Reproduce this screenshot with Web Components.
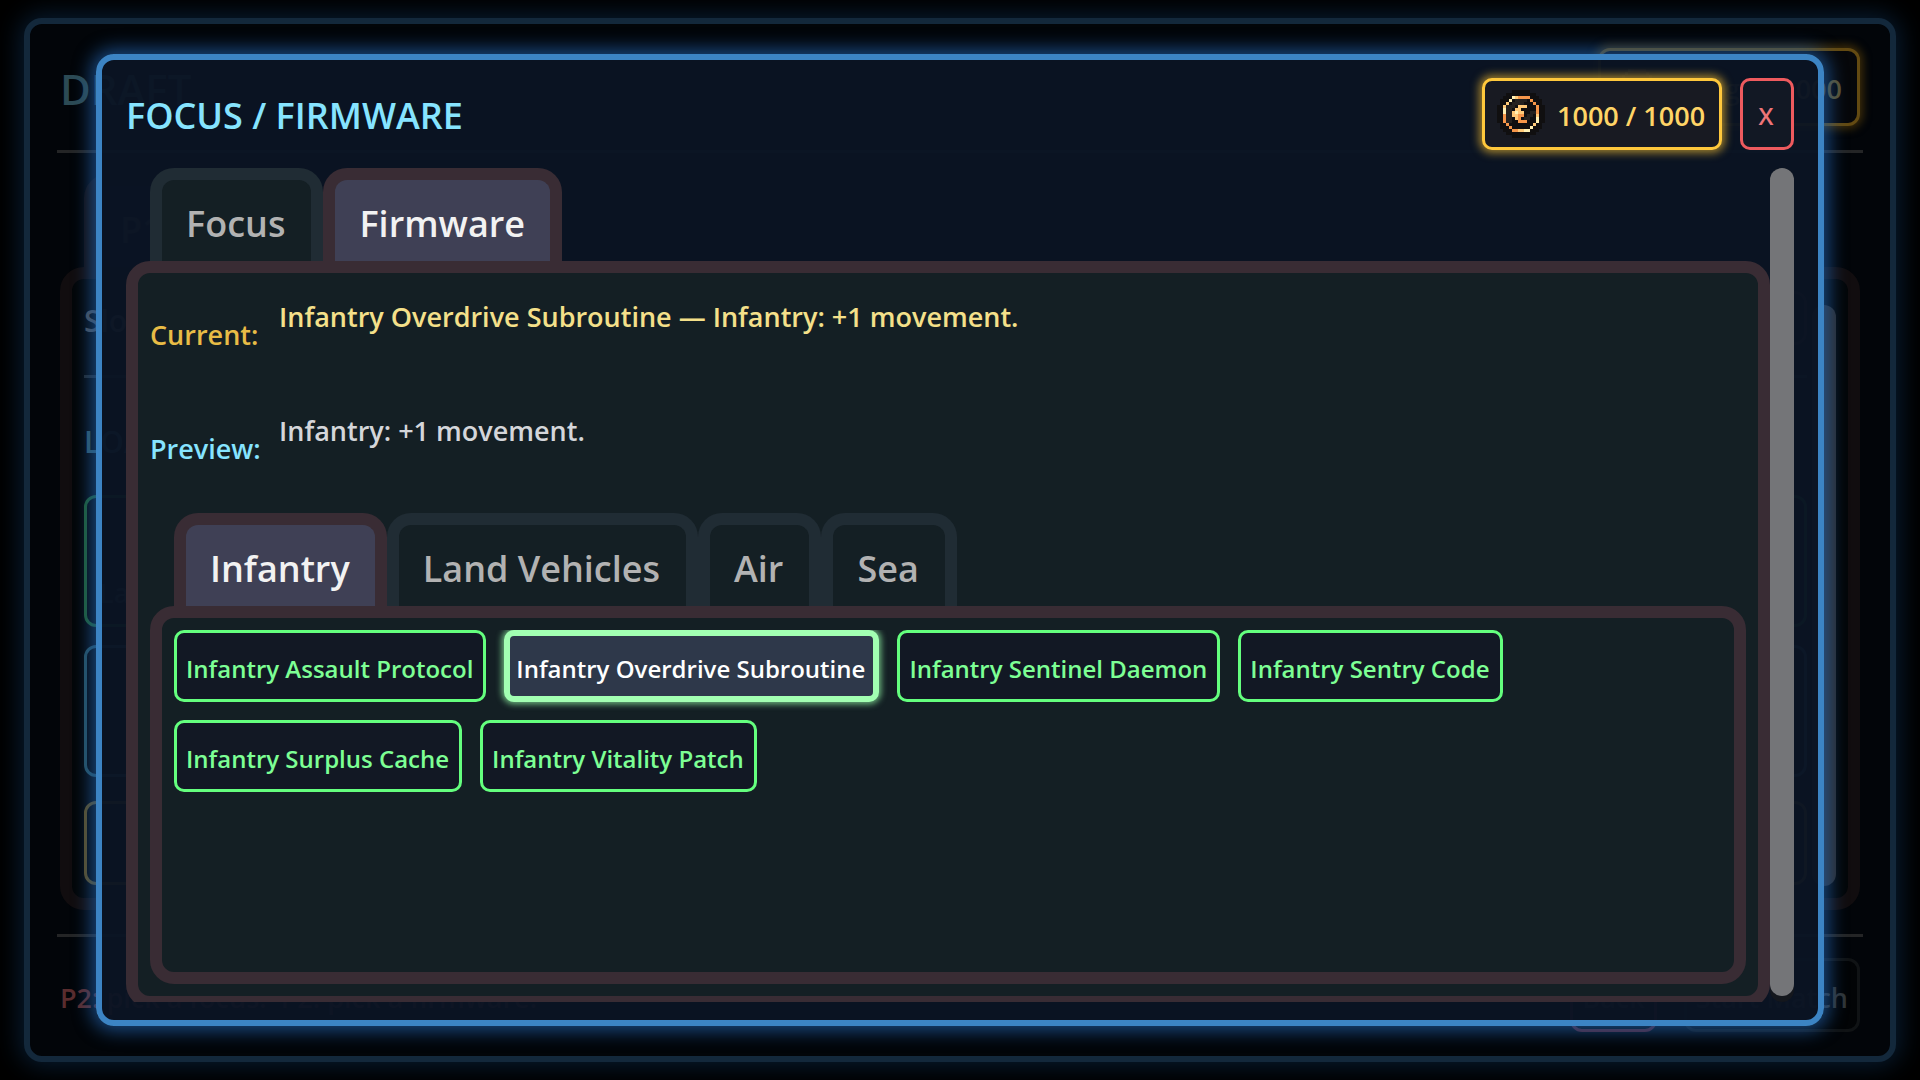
<!DOCTYPE html>
<html lang="en">
<head>
<meta charset="utf-8">
<title>Focus / Firmware</title>
<style>
  body{
    margin: 0;
    min-height: 100vh;
    display: grid;
    overflow: hidden;
    background: #000;
    color: #f2f2f2;
    font-family: "Open Sans", "Noto Sans", sans-serif;
    font-weight: 600;
    font-size: 27px;
    line-height: 38px;
  }

  body > *{
    grid-area: 1 / 1;
  }
</style>
</head>
<body>
  <draft-screen></draft-screen>

  <focus-dialog heading="FOCUS / FIRMWARE">
    <coin-badge slot="actions">1000 / 1000</coin-badge>

    <tab-panel tabs="Focus,Firmware" selected="Firmware">
      <info-row label="Current:" tone="gold">Infantry Overdrive Subroutine — Infantry: +1 movement.</info-row>
      <info-row label="Preview:" tone="cyan">Infantry: +1 movement.</info-row>

      <tab-panel class="units" tabs="Infantry,Land Vehicles,Air,Sea" selected="Infantry">
        <firmware-list>
          <firmware-chip>Infantry Assault Protocol</firmware-chip>
          <firmware-chip selected>Infantry Overdrive Subroutine</firmware-chip>
          <firmware-chip>Infantry Sentinel Daemon</firmware-chip>
          <firmware-chip>Infantry Sentry Code</firmware-chip>
          <firmware-chip>Infantry Surplus Cache</firmware-chip>
          <firmware-chip>Infantry Vitality Patch</firmware-chip>
        </firmware-list>
      </tab-panel>
    </tab-panel>
  </focus-dialog>

<script>
function makeTemplate(html) {
  const template = document.createElement("template");
  template.innerHTML = html;
  return template;
}

class BaseElement extends HTMLElement {
  constructor() {
    super();
    this.attachShadow({ mode: "open" });
    this.shadowRoot.appendChild(this.constructor.template.content.cloneNode(true));
  }
}

// 16x16 coin: k outline, d face, y/o/w light, orange and pale metal
const COIN = [
  ".....kkkkkk.....",
  "...kkkkkkkkkk...",
  "..kkkwyooookkk..",
  ".kkkwkddddkokkk.",
  ".kkykddddkkkokk.",
  "kkydddkyyykkkokk",
  "kkwddkyykkkkkokk",
  "kkwddywyykkddokk",
  "kkoddyyookddkykk",
  "kkoddkyokddkkwkk",
  "kkoddkkoookkkwkk",
  ".kkokkkkkkkkykk.",
  ".kkkokkkkkkwkkk.",
  "..kkkooyywwkkk..",
  "...kkkkkkkkkk...",
  ".....kkkkkk.....",
];
const COIN_COLORS = { k: "#100f10", d: "#24211f", w: "#fff0b4", y: "#ffc978", o: "#f5964a" };

class PixelCoin extends BaseElement {
  static template = makeTemplate(`
    <style>
      :host{
        display: block;
        flex: none;
        width: 48px;
        height: 48px;
      }

      svg{
        display: block;
      }
    </style>
    <svg width="48" height="48" viewBox="0 0 16 16" shape-rendering="crispEdges" aria-hidden="true"></svg>
  `);

  connectedCallback() {
    let rects = "";
    COIN.forEach((row, y) => {
      [...row].forEach((cell, x) => {
        if (cell != ".") {
          rects += `<rect x="${x}" y="${y}" width="1" height="1" fill="${COIN_COLORS[cell]}"/>`;
        }
      });
    });
    this.shadowRoot.querySelector("svg").innerHTML = rects;
  }
}

class CoinBadge extends BaseElement {
  static template = makeTemplate(`
    <style>
      :host{
        display: flex;
        align-items: center;
        gap: 12px;
        box-sizing: border-box;
        min-width: 240px;
        height: 72px;
        padding: 0 12px;
        border: 3px solid #ffc83c;
        border-radius: 10px;
        background: #181a22;
        color: #ffd466;
        box-shadow: 0 0 9px 3px rgba(255, 196, 50, 0.6);
        white-space: nowrap;
      }

      .amount{
        padding-top: 4px;
      }
    </style>
    <pixel-coin></pixel-coin>
    <span class="amount"><slot></slot></span>
  `);
}

class InfoRow extends BaseElement {
  static template = makeTemplate(`
    <style>
      :host{
        display: grid;
        grid-template-columns: 111px 1fr;
        column-gap: 18px;
        height: 96px;
        margin-bottom: 18px;
      }

      .label{
        align-self: center;
        padding-top: 4px;
        color: #e8bc46;
      }

      .value{
        padding-top: 13px;
        color: #f4e08a;
      }

      :host([tone="cyan"]) .label{
        color: #86e4ff;
      }

      :host([tone="cyan"]) .value{
        color: #d4d6da;
      }
    </style>
    <span class="label"></span>
    <span class="value"><slot></slot></span>
  `);

  connectedCallback() {
    this.shadowRoot.querySelector(".label").textContent = this.getAttribute("label");
  }
}

class TabPanel extends BaseElement {
  static template = makeTemplate(`
    <style>
      :host{
        display: block;
      }

      .tabs{
        display: flex;
        padding-left: 24px;
      }

      button{
        margin: 0;
        padding: 19px 26px 12px 24px;
        border: 12px solid #202c34;
        border-bottom: 0;
        border-radius: 24px 24px 0 0;
        background: #141f24;
        color: #b2b2b2;
        font: inherit;
        font-size: 36px;
        line-height: 50px;
        white-space: nowrap;
      }

      button[aria-selected="true"]{
        padding-right: 25px;
        border-color: #392c34;
        background: #3f4055;
        color: #f2f2f2;
      }

      .panel{
        padding: 12px;
        border: 12px solid #392c34;
        border-radius: 24px;
        background: #141f24;
      }

      :host(.units) .panel{
        box-sizing: border-box;
        min-height: 35vh;
      }
    </style>
    <div class="tabs" role="tablist"></div>
    <div class="panel" role="tabpanel"><slot></slot></div>
  `);

  connectedCallback() {
    const tabs = this.shadowRoot.querySelector(".tabs");
    for (const name of this.getAttribute("tabs").split(",")) {
      const button = document.createElement("button");
      button.type = "button";
      button.setAttribute("role", "tab");
      button.setAttribute("aria-selected", name == this.getAttribute("selected"));
      button.textContent = name;
      tabs.appendChild(button);
    }
  }
}

class FirmwareList extends BaseElement {
  static template = makeTemplate(`
    <style>
      :host{
        display: flex;
        flex-wrap: wrap;
        gap: 18px;
        overflow: hidden;
        padding-bottom: 12px;
      }
    </style>
    <slot></slot>
  `);
}

class FirmwareChip extends BaseElement {
  static template = makeTemplate(`
    <style>
      :host{
        display: block;
      }

      button{
        display: block;
        box-sizing: border-box;
        height: 72px;
        margin: 0;
        padding: 6px 10px 0 9px;
        border: 3px solid #64ff7e;
        border-radius: 10px;
        background: #121824;
        color: #7dff94;
        font: inherit;
        font-size: 24px;
        white-space: nowrap;
      }

      :host([selected]) button{
        padding: 6px 8px 0 6px;
        border: 6px solid #a2ffb2;
        background: #2e384a;
        color: #fff;
        box-shadow: 0 0 6px 2px rgba(150, 255, 170, 0.7);
      }
    </style>
    <button type="button"><slot></slot></button>
  `);
}

class FocusDialog extends BaseElement {
  static template = makeTemplate(`
    <style>
      :host{
        display: flex;
        flex-direction: column;
        gap: 18px;
        box-sizing: border-box;
        height: calc(100vh - 108px);
        margin: 54px 96px;
        padding: 18px 24px;
        border: 6px solid #3c84c4;
        border-radius: 18px;
        background: rgba(11, 20, 36, 0.95);
        box-shadow: 0 0 18px 5px rgba(34, 100, 176, 0.7);
        z-index: 1;
      }

      header{
        display: flex;
        align-items: center;
        gap: 18px;
      }

      h1{
        flex: 1;
        margin: 0;
        padding-top: 4px;
        font: inherit;
        font-size: 36px;
        line-height: 50px;
        color: #86e4ff;
      }

      .close{
        width: 54px;
        height: 72px;
        margin: 0;
        padding: 4px 2px 0 0;
        border: 3px solid #ee5a5e;
        border-radius: 10px;
        background: #121824;
        color: #ee7478;
        font: inherit;
        font-size: 24px;
      }

      .body{
        display: flex;
        flex: 1;
        min-height: 0;
      }

      .content{
        flex: 1;
        min-width: 0;
        overflow: hidden;
      }

      .track{
        width: 24px;
        padding-bottom: 6px;
        border-radius: 12px;
        background: #14171d;
        box-sizing: border-box;
      }

      .thumb{
        height: 100%;
        border-radius: 12px;
        background: #747578;
      }
    </style>
    <header>
      <h1></h1>
      <slot name="actions"></slot>
      <button class="close" type="button" aria-label="Close">X</button>
    </header>
    <div class="body">
      <div class="content"><slot></slot></div>
      <div class="track"><div class="thumb"></div></div>
    </div>
  `);

  connectedCallback() {
    this.setAttribute("role", "dialog");
    this.shadowRoot.querySelector("h1").textContent = this.getAttribute("heading");
  }
}

// dimmed screen behind the dialog
class DraftScreen extends BaseElement {
  static template = makeTemplate(`
    <style>
      :host{
        display: flex;
        flex-direction: column;
        box-sizing: border-box;
        height: calc(100vh - 36px);
        margin: 18px 24px;
        padding: 24px 27px;
        border: 6px solid #13283b;
        border-radius: 18px;
        background: #020509;
        box-shadow: 0 0 24px 4px rgba(12, 40, 70, 0.7);
      }

      header,
      footer{
        display: flex;
        align-items: center;
        gap: 27px;
        padding: 0 3px;
      }

      header{
        height: 78px;
      }

      footer{
        height: 74px;
      }

      h2{
        flex: 1;
        margin: 0;
        padding-top: 4px;
        font: inherit;
        font-size: 42px;
        line-height: 58px;
        color: #2c4a54;
      }

      .budget{
        display: flex;
        align-items: center;
        gap: 12px;
        box-sizing: border-box;
        height: 78px;
        padding: 0 15px 0 12px;
        border: 3px solid #634a12;
        border-radius: 12px;
        background: #06070a;
        color: #5c532f;
        box-shadow: 0 0 9px 3px rgba(120, 84, 10, 0.5);
      }

      .budget span{
        padding-top: 4px;
      }

      .budget pixel-coin{
        opacity: 0.3;
      }

      hr{
        flex: none;
        width: 100%;
        height: 3px;
        margin: 24px 0 21px;
        border: 0;
        background: #242526;
      }

      .tab{
        align-self: flex-start;
        margin-left: 27px;
        padding: 19px 24px 12px;
        border: 12px solid #110d0f;
        border-bottom: 0;
        border-radius: 24px 24px 0 0;
        background: #12121a;
        color: #3a3c40;
        font-size: 36px;
        line-height: 50px;
      }

      .panel{
        flex: 1;
        display: flex;
        box-sizing: border-box;
        min-height: 0;
        margin: 0 3px;
        padding: 12px;
        border: 12px solid #110d0f;
        border-radius: 24px;
        background: #030608;
      }

      .slots{
        flex: 1;
        display: flex;
        flex-direction: column;
        gap: 18px;
        margin-right: 5px;
      }

      .line{
        flex: none;
        display: flex;
        align-items: center;
        justify-content: space-between;
        box-sizing: border-box;
        height: 54px;
        color: #4a4f54;
        font-size: 30px;
      }

      .line span{
        padding-top: 6px;
      }

      .rule{
        flex: none;
        height: 3px;
        margin-top: 12px;
        background: #22282c;
      }

      .line.loadout{
        height: 81px;
        padding-top: 4px;
        color: #2f5866;
      }

      .card{
        flex: none;
        box-sizing: border-box;
        height: 132px;
        padding: 76px 12px 0;
        border: 3px solid #1e5c30;
        border-radius: 12px;
        color: #34383c;
      }

      .card.blue{
        border-color: #25505e;
      }

      .card.gold{
        height: 84px;
        margin-top: 6px;
        border-color: #5e4e20;
      }

      .scroll{
        width: 24px;
        margin: 14px 0 0;
        border-radius: 12px;
        background: #2c2c2e;
      }

      footer p{
        flex: 1;
        margin: 0;
        padding-top: 6px;
        color: #5a2c2e;
        white-space: pre-wrap;
      }

      button{
        height: 74px;
        margin: 0;
        padding: 6px 9px 0;
        border: 3px solid #101315;
        border-radius: 12px;
        background: #020406;
        color: #303436;
        font: inherit;
      }

      .line button{
        width: 84px;
        height: 54px;
        border-color: #2a1a1e;
      }

      .back{
        border-color: #52202c;
      }
    </style>
    <header>
      <h2>DRAFT</h2>
      <div class="budget"><pixel-coin></pixel-coin><span>Budget: 1000</span></div>
    </header>
    <hr>
    <div class="tab">P1</div>
    <div class="panel">
      <div class="slots">
        <div class="line"><span>Slots</span><button type="button" aria-label="Clear slots"></button></div>
        <div class="rule"></div>
        <div class="line loadout"><span>LOADOUT</span></div>
        <div class="card">Land</div>
        <div class="card blue"></div>
        <div class="card gold"></div>
      </div>
      <div class="scroll"></div>
    </div>
    <hr>
    <footer>
      <p>P2: pick a focus.  P2: pick a firmware.</p>
      <button class="back" type="button">Back</button>
      <button type="button">Start Match</button>
    </footer>
  `);
}

customElements.define("pixel-coin", PixelCoin);
customElements.define("coin-badge", CoinBadge);
customElements.define("info-row", InfoRow);
customElements.define("tab-panel", TabPanel);
customElements.define("firmware-list", FirmwareList);
customElements.define("firmware-chip", FirmwareChip);
customElements.define("focus-dialog", FocusDialog);
customElements.define("draft-screen", DraftScreen);
</script>
</body>
</html>
